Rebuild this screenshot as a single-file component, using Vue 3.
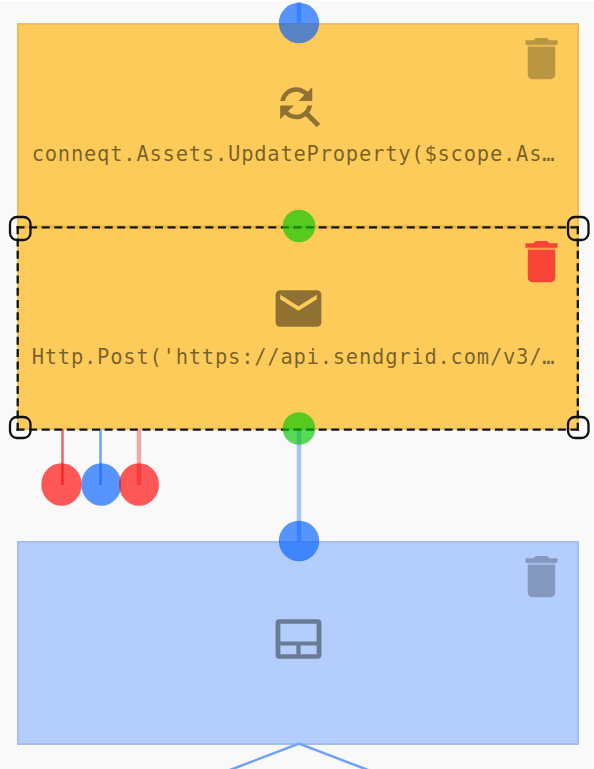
<script setup>
const nodes = [
  { id: 'update', tone: 'amber', icon: 'replace', label: 'conneqt.Assets.UpdateProperty($scope.As…' },
  { id: 'post', tone: 'amber', icon: 'mail', label: "Http.Post('https://api.sendgrid.com/v3/…", selected: true },
  { id: 'panel', tone: 'blue', icon: 'panel', label: '' },
]
const icons = {
  replace: 'M11 6c1.38 0 2.63.56 3.54 1.46L12 10h6V4l-2.05 2.05C14.68 4.78 12.93 4 11 4c-3.53 0-6.43 2.61-6.92 6H6.1c.46-2.28 2.48-4 4.9-4zm5.64 9.14c.66-.9 1.12-1.97 1.28-3.14H15.9c-.46 2.28-2.48 4-4.9 4-1.38 0-2.63-.56-3.54-1.46L10 12H4v6l2.05-2.05C7.32 17.22 9.07 18 11 18c1.55 0 2.98-.51 4.14-1.36L20 21.49 21.49 20l-4.85-4.86z',
  mail: 'M20 4H4c-1.1 0-1.99.9-1.99 2L2 18c0 1.1.9 2 2 2h16c1.1 0 2-.9 2-2V6c0-1.1-.9-2-2-2zm0 4l-8 5-8-5V6l8 5 8-5v2z',
  panel: 'M3.6 3.6H20.4A1.6 1.6 0 0 1 22 5.2V19.2A1.6 1.6 0 0 1 20.4 20.8H3.6A1.6 1.6 0 0 1 2 19.2V5.2A1.6 1.6 0 0 1 3.6 3.6ZM4.1 5.6V13.3H19.9V5.6ZM4.1 15.1V18.9H11.05V15.1ZM12.95 15.1V18.9H19.9V15.1Z',
}
const trash = 'M6 19c0 1.1.9 2 2 2h8c1.1 0 2-.9 2-2V7H6v12zM19 4h-3.5l-1-1h-5l-1 1H5v2h14V4z'
const handles = [[10, 217, 23], [568, 217, 23], [10, 417, 21], [568, 417, 21]]
</script>

<template>
  <main class="canvas">
    <section v-for="n in nodes" :key="n.id" class="node" :class="[n.tone, n.id]">
      <svg class="trash" :class="{ active: n.selected }" viewBox="0 0 24 24">
        <path class="gap" d="M6 6h12v1H6z" />
        <path :d="trash" />
      </svg>
      <svg class="icon" viewBox="0 0 24 24"><path fill-rule="evenodd" :d="icons[n.icon]" /></svg>
      <p v-if="n.label" class="label">{{ n.label }}</p>
    </section>

    <svg class="overlay" viewBox="0 0 594 769">
      <rect class="edge-top" x="0" y="0" width="594" height="1" />
      <g class="wire blue-line">
        <path class="thick" d="M299 2V24M299 430V541" />
        <path d="M100.5 429V485" />
        <path d="M230 770L299 743.500L368 770" />
      </g>
      <path class="wire red-line" d="M62.500 429V485" />
      <path class="wire red-line wide" d="M139 429V485" />

      <path class="seam" d="M17 227.300H579" />
      <g class="selection">
        <path class="horizontal" d="M16.500 227.300H579M16.500 429.700H579" />
        <path class="vertical" d="M17.700 226.300V430.700M577.800 226.300V430.700" />
        <rect v-for="h in handles" :key="h.join()" :x="h[0]" :y="h[1]" width="20.500" :height="h[2]" rx="7" />
      </g>

      <g class="port blue-port">
        <circle cx="299" cy="23" r="20.200" />
        <circle cx="299" cy="541" r="20.200" />
        <ellipse cx="101.300" cy="484.500" rx="20" ry="21.300" />
      </g>
      <g class="port red-port">
        <ellipse cx="61.500" cy="484.500" rx="20.200" ry="21.300" />
        <ellipse cx="139" cy="484.500" rx="20" ry="21.300" />
      </g>
      <g class="port green-port">
        <circle cx="299" cy="226" r="16.300" />
        <circle cx="299" cy="428.500" r="16.300" />
      </g>
    </svg>
  </main>
</template>

<style>
body { margin: 0; background: #f9f9f9; }
</style>

<style scoped>
.canvas { position: relative; width: 594px; height: 769px; overflow: hidden; background: #f9f9f9; }
.node {
  position: absolute; left: 17px; width: 562px; height: 204px; box-sizing: border-box;
  padding: 53px 0 0; display: flex; flex-direction: column; align-items: center;
}
.update { top: 23px; }
.post { top: 226px; }
.panel { top: 541px; }
.amber { background: #fdcb5a; border: 2px solid #ecbf5a; }
.blue { background: #b3cefc; border: 2px solid #a6bfe8; }
.icon { width: 55px; height: 55px; flex: none; fill: #000; opacity: .43; margin-left: 1px; }
.panel .icon { opacity: .4; margin-top: 15px; }
.trash { position: absolute; right: 8px; top: 6px; width: 55px; height: 55px; fill: rgba(0, 0, 0, .26); }
.trash.active { fill: #f74436; }
.gap { opacity: .4; }
.label {
  margin: 8px 0 0 -9px; white-space: nowrap;
  font: 20.500px/26px "DejaVu Sans Mono", monospace; letter-spacing: .750px; color: rgba(0, 0, 0, .53);
}
.overlay { position: absolute; inset: 0; width: 594px; height: 769px; }
.edge-top { fill: #fff; }
.wire { fill: none; stroke-width: 2.500; }
.blue-line { stroke: #6da2fb; }
.blue-line .thick { stroke: #a4c4fb; stroke-width: 4.500; }
.red-line { stroke: #e86a67; }
.red-line.wide { stroke: #eea9a5; stroke-width: 4.500; }
.seam { stroke: #f3b32b; stroke-width: 2.500; }
.selection { fill: none; stroke: #111; stroke-width: 2.300; }
.horizontal { stroke-dasharray: 8 4.590; }
.vertical { stroke-dasharray: 8 4.280; }
.blue-port { fill: rgba(0, 94, 255, .65); }
.red-port { fill: rgba(255, 0, 0, .65); }
.green-port { fill: rgba(0, 200, 0, .65); }
</style>
